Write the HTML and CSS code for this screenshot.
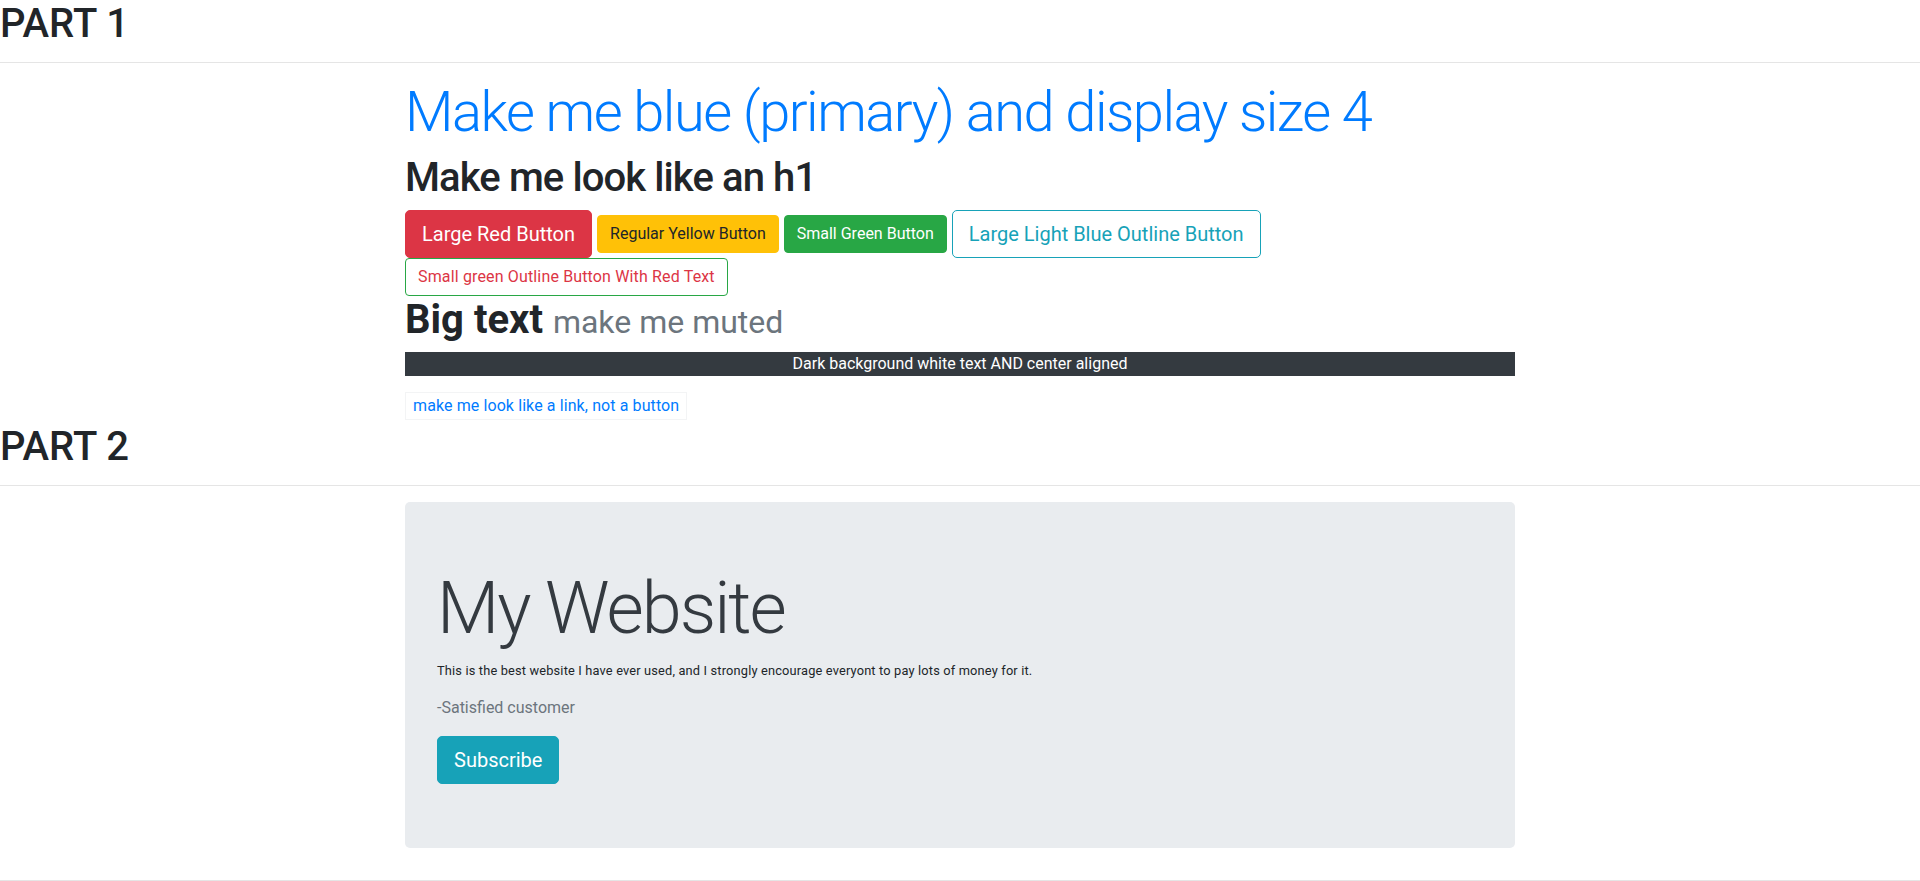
FILE: index.html
```html
<!DOCTYPE html>
<html lang="en">
<head>
<meta charset="utf-8">
<title>Bootstrap practice</title>
<link rel="stylesheet" href="styles.css">
</head>
<body>
  <h1 class="part-title">PART 1</h1>
  <hr class="rule">
  <div class="container">
    <h1 class="display-4">Make me blue (primary) and display size 4</h1>
    <h1 class="heading heading-tight">Make me look like an h1</h1>
    <div class="btn-row">
      <button class="btn btn-lg btn-red">Large Red Button</button>
      <button class="btn btn-yellow">Regular Yellow Button</button>
      <button class="btn btn-green">Small Green Button</button>
      <button class="btn btn-lg btn-outline-info">Large Light Blue Outline Button</button>
    </div>
    <div class="btn-row">
      <button class="btn btn-outline-green">Small green Outline Button With Red Text</button>
    </div>
    <h1 class="heading big"><strong>Big text</strong> <small class="muted">make me muted</small></h1>
    <p class="dark-bar">Dark background white text AND center aligned</p>
    <div class="link-row">
      <a class="btn-link" href="#">make me look like a link, not a button</a>
    </div>
  </div>
  <h1 class="part-title">PART 2</h1>
  <hr class="rule">
  <div class="container">
    <div class="jumbotron">
      <h1 class="display-3">My Website</h1>
      <p class="small">This is the best website I have ever used, and I strongly encourage everyont to pay lots of money for it.</p>
      <p class="quote">-Satisfied customer</p>
      <button class="btn btn-lg btn-info">Subscribe</button>
    </div>
  </div>
  <hr class="rule bottom-rule">
</body>
</html>
```
FILE: styles.css
```css
html, body {
  margin: 0;
  padding: 0;
}

body {
  font-family: "Roboto", "Liberation Sans", sans-serif;
  font-size: 16px;
  line-height: 1.5;
  color: #212529;
  background: #fff;
}

h1, p {
  margin: 0;
}

.part-title {
  font-size: 40px;
  font-weight: 500;
  line-height: 48px;
  margin: 0;
}

.rule {
  border: 0;
  border-top: 1px solid rgba(0, 0, 0, 0.1);
  margin: 14px 0 16px;
  height: 0;
}

.bottom-rule {
  margin-top: 32px;
}

.container {
  width: 1110px;
  margin: 0 auto;
}

.display-4 {
  font-size: 56px;
  font-weight: 300;
  line-height: 1.2;
  color: #007bff;
  letter-spacing: -1.5px;
  margin-bottom: 8px;
}

.heading {
  font-size: 40px;
  font-weight: 500;
  line-height: 48px;
  margin-bottom: 8px;
}

.heading-tight {
  letter-spacing: -0.9px;
}

.btn-row {
  display: flex;
  align-items: center;
  gap: 5px;
}

.btn {
  font-family: inherit;
  display: inline-block;
  font-size: 16px;
  font-weight: 400;
  line-height: 24px;
  padding: 6px 12px;
  border: 1px solid transparent;
  border-radius: 4px;
  background: transparent;
  color: #212529;
  cursor: pointer;
}

.btn-lg {
  font-size: 20px;
  line-height: 30px;
  padding: 8px 16px;
  border-radius: 5px;
}

.btn-red {
  background: #dc3545;
  border-color: #dc3545;
  color: #fff;
}

.btn-yellow {
  background: #ffc107;
  border-color: #ffc107;
  color: #212529;
}

.btn-green {
  background: #28a745;
  border-color: #28a745;
  color: #fff;
}

.btn-outline-info {
  border-color: #17a2b8;
  color: #17a2b8;
}

.btn-outline-green {
  border-color: #28a745;
  color: #dc3545;
  letter-spacing: 0.15px;
}

.btn-info {
  background: #17a2b8;
  border-color: #17a2b8;
  color: #fff;
}

.big {
  margin-bottom: 8px;
}

.big strong {
  font-weight: 700;
}

.muted {
  font-size: 80%;
  font-weight: 400;
  line-height: 1;
  color: #6c757d;
}

.dark-bar {
  background: #343a40;
  color: #fff;
  text-align: center;
  line-height: 24px;
  margin-bottom: 16px;
}

.link-row {
  display: flex;
  padding-bottom: 3px;
}

.btn-link {
  display: inline-block;
  color: #007bff;
  text-decoration: none;
  border: 1px solid #f3f4f5;
  padding: 1px 7px;
  line-height: 24px;
  font-size: 16px;
  letter-spacing: 0.1px;
}

.jumbotron {
  background: #e9ecef;
  border-radius: 5px;
  padding: 64px 32px;
}

.display-3 {
  font-size: 72px;
  font-weight: 300;
  line-height: 1.2;
  color: #343a40;
  letter-spacing: -2px;
  margin-bottom: 8px;
}

.small {
  font-size: 12.8px;
  line-height: 19.2px;
  letter-spacing: 0.17px;
  margin-bottom: 16px;
}

.quote {
  color: #6c757d;
  margin-bottom: 16px;
}
```
